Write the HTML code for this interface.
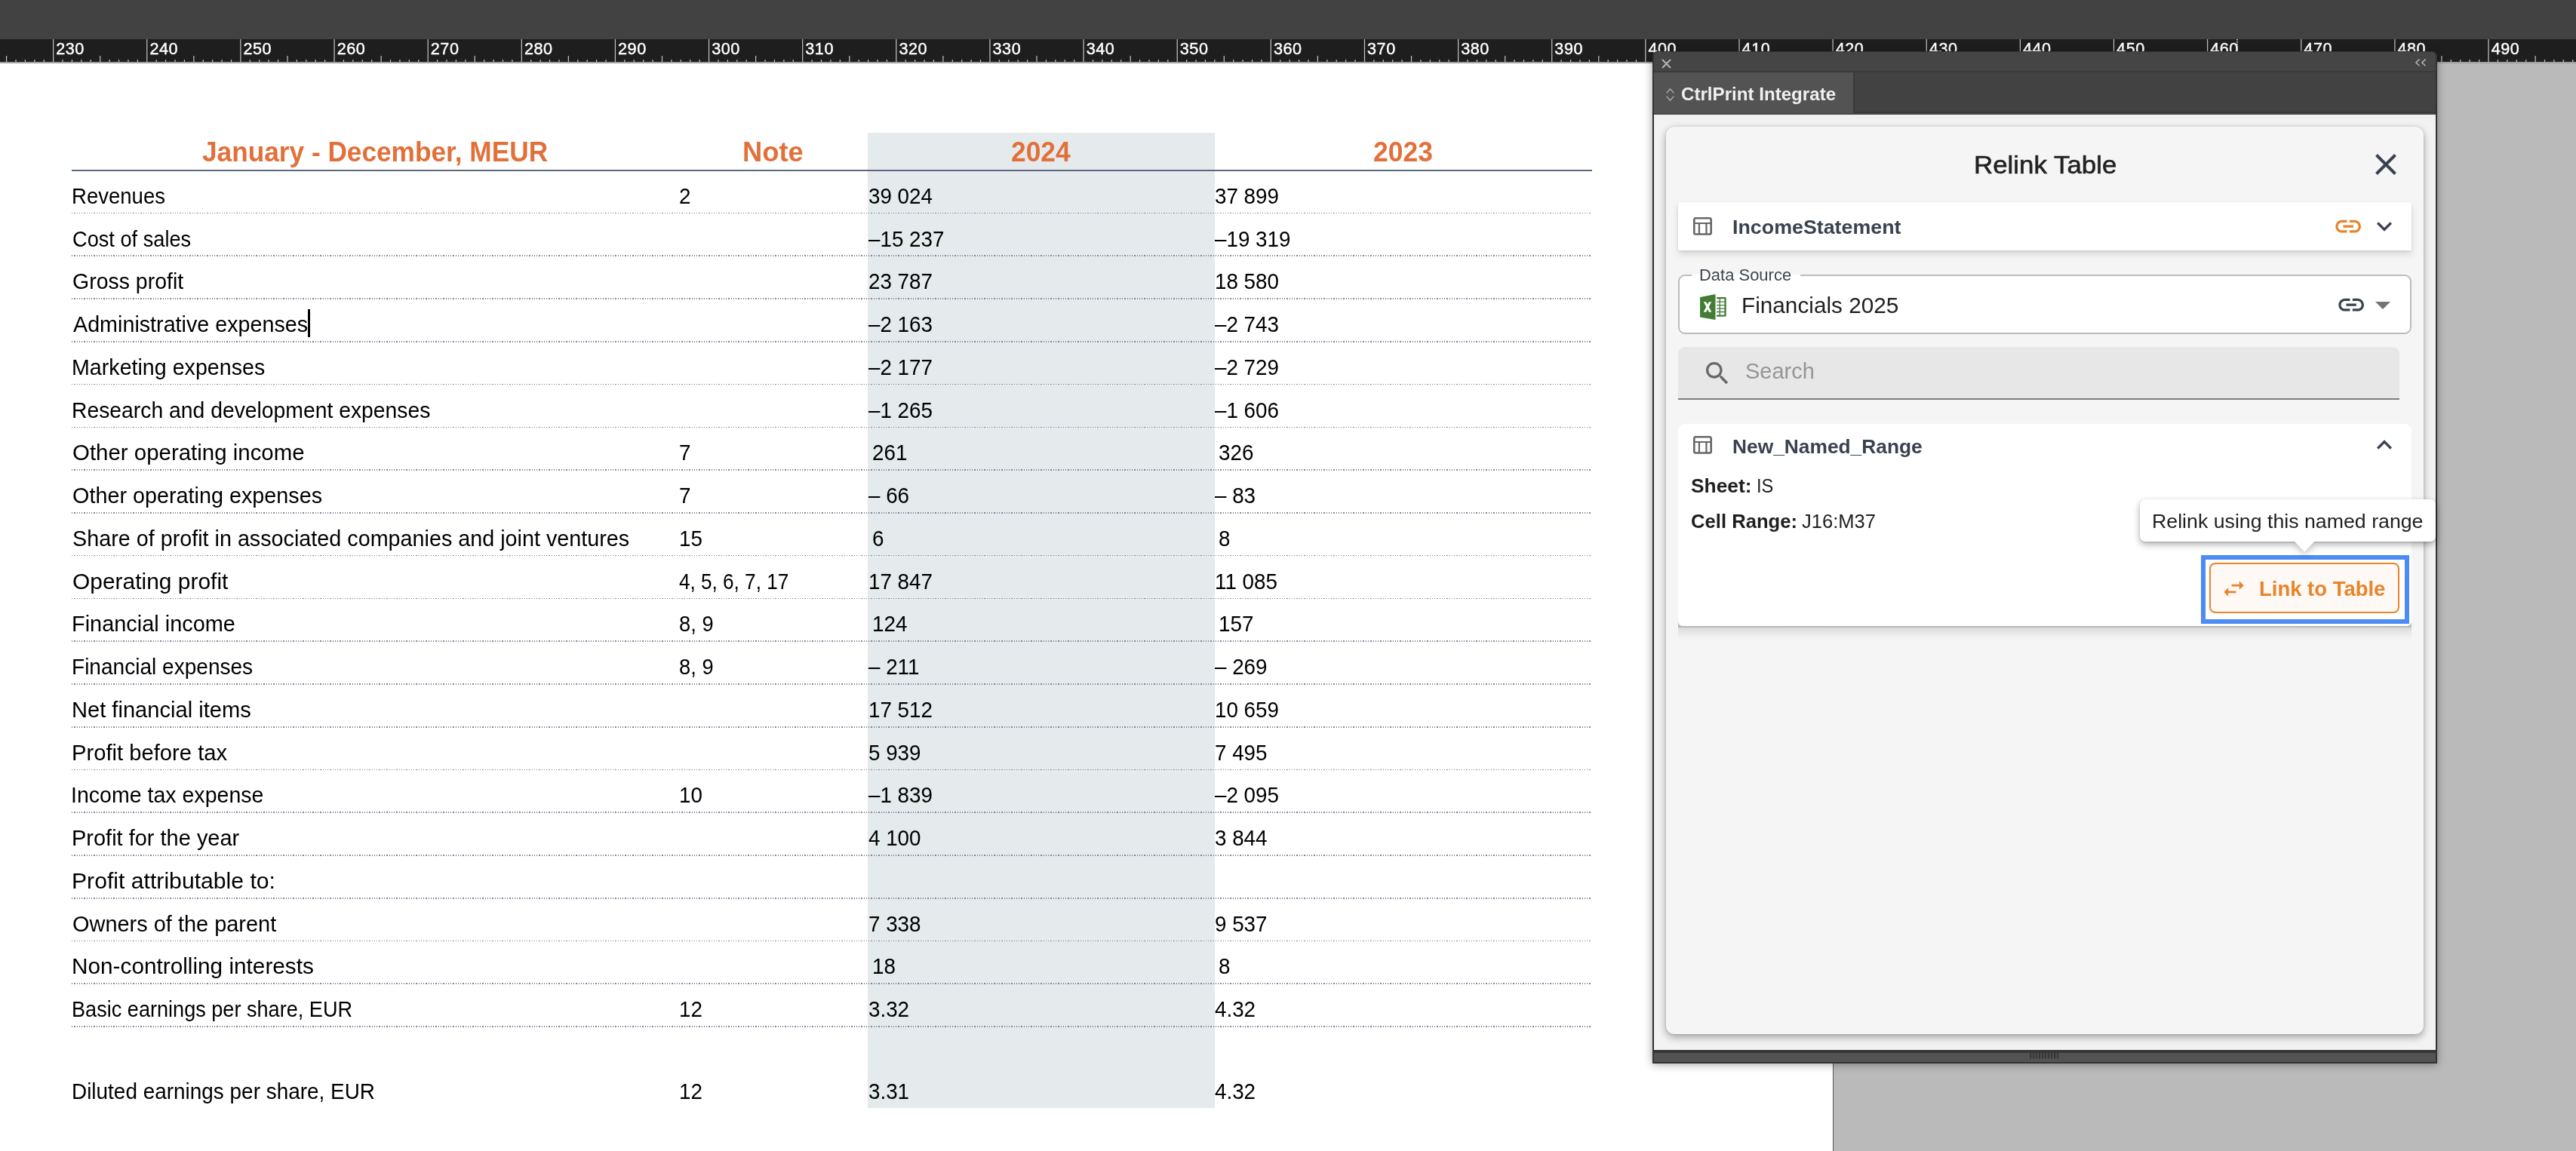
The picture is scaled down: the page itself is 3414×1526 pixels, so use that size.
<!DOCTYPE html>
<html><head><meta charset="utf-8"><title>Relink Table</title>
<style>
html,body{margin:0;padding:0}
#w{position:absolute;left:0;top:0;width:3414px;height:1526px;will-change:transform}
body{width:3414px;height:1526px;position:relative;overflow:hidden;background:#fff;font-family:"Liberation Sans",sans-serif}
.a{position:absolute}
.t{position:absolute;white-space:pre;line-height:0;transform-origin:0 0}
svg{position:absolute;overflow:visible}
.dot{position:absolute;height:1.7px;left:95px;width:2015px;background:repeating-linear-gradient(90deg,#7a8497 0 1.25px,rgba(122,132,151,0) 1.25px 3.26px)}
</style></head><body><div id="w">

<div class="a" style="left:2430px;top:84px;width:984px;height:1442px;background:#bababa;"></div>
<div class="a" style="left:2429px;top:84px;width:1px;height:1442px;background:#555;"></div>
<div class="a" style="left:1150px;top:176px;width:460px;height:1293.3px;background:#e5eaec;"></div>
<span class="t" style="left:268.17px;top:200.70px;font-size:37.2px;color:#e2703a;font-weight:bold;transform:scaleX(0.9472);">January - December, MEUR</span>
<span class="t" style="left:984.04px;top:200.70px;font-size:37.2px;color:#e2703a;font-weight:bold;transform:scaleX(0.9766);">Note</span>
<span class="t" style="left:1340.16px;top:200.70px;font-size:37.2px;color:#e2703a;font-weight:bold;transform:scaleX(0.9498);">2024</span>
<span class="t" style="left:1820.31px;top:200.70px;font-size:37.2px;color:#e2703a;font-weight:bold;transform:scaleX(0.9543);">2023</span>
<div class="a" style="left:95px;top:224.9px;width:2015px;height:2.1px;background:#5a697e;"></div>
<span class="t" style="left:94.80px;top:259.80px;font-size:30px;transform:scaleX(0.9180);">Revenues</span>
<span class="t" style="left:899.60px;top:259.80px;font-size:30px;transform:scaleX(0.9260);">2</span>
<span class="t" style="left:1150.60px;top:259.80px;font-size:30px;transform:scaleX(0.9260);">39 024</span>
<span class="t" style="left:1609.60px;top:259.80px;font-size:30px;transform:scaleX(0.9260);">37 899</span>
<div class="dot" style="top:281.70px"></div>
<span class="t" style="left:95.64px;top:316.56px;font-size:30px;transform:scaleX(0.9066);">Cost of sales</span>
<span class="t" style="left:1150.60px;top:316.56px;font-size:30px;transform:scaleX(0.9260);">–15 237</span>
<span class="t" style="left:1609.60px;top:316.56px;font-size:30px;transform:scaleX(0.9260);">–19 319</span>
<div class="dot" style="top:338.46px"></div>
<span class="t" style="left:95.58px;top:373.32px;font-size:30px;transform:scaleX(0.9491);">Gross profit</span>
<span class="t" style="left:1150.60px;top:373.32px;font-size:30px;transform:scaleX(0.9260);">23 787</span>
<span class="t" style="left:1609.60px;top:373.32px;font-size:30px;transform:scaleX(0.9260);">18 580</span>
<div class="dot" style="top:395.22px"></div>
<span class="t" style="left:97.00px;top:430.08px;font-size:30px;transform:scaleX(0.9570);">Administrative expenses</span>
<span class="t" style="left:1150.60px;top:430.08px;font-size:30px;transform:scaleX(0.9260);">–2 163</span>
<span class="t" style="left:1609.60px;top:430.08px;font-size:30px;transform:scaleX(0.9260);">–2 743</span>
<div class="dot" style="top:451.98px"></div>
<span class="t" style="left:94.71px;top:486.84px;font-size:30px;transform:scaleX(0.9545);">Marketing expenses</span>
<span class="t" style="left:1150.60px;top:486.84px;font-size:30px;transform:scaleX(0.9260);">–2 177</span>
<span class="t" style="left:1609.60px;top:486.84px;font-size:30px;transform:scaleX(0.9260);">–2 729</span>
<div class="dot" style="top:508.74px"></div>
<span class="t" style="left:94.73px;top:543.60px;font-size:30px;transform:scaleX(0.9439);">Research and development expenses</span>
<span class="t" style="left:1150.60px;top:543.60px;font-size:30px;transform:scaleX(0.9260);">–1 265</span>
<span class="t" style="left:1609.60px;top:543.60px;font-size:30px;transform:scaleX(0.9260);">–1 606</span>
<div class="dot" style="top:565.50px"></div>
<span class="t" style="left:95.68px;top:600.36px;font-size:30px;transform:scaleX(0.9812);">Other operating income</span>
<span class="t" style="left:899.60px;top:600.36px;font-size:30px;transform:scaleX(0.9260);">7</span>
<span class="t" style="left:1156.30px;top:600.36px;font-size:30px;transform:scaleX(0.9260);">261</span>
<span class="t" style="left:1615.30px;top:600.36px;font-size:30px;transform:scaleX(0.9260);">326</span>
<div class="dot" style="top:622.26px"></div>
<span class="t" style="left:95.71px;top:657.12px;font-size:30px;transform:scaleX(0.9592);">Other operating expenses</span>
<span class="t" style="left:899.60px;top:657.12px;font-size:30px;transform:scaleX(0.9260);">7</span>
<span class="t" style="left:1150.60px;top:657.12px;font-size:30px;transform:scaleX(0.9260);">– 66</span>
<span class="t" style="left:1609.60px;top:657.12px;font-size:30px;transform:scaleX(0.9260);">– 83</span>
<div class="dot" style="top:679.02px"></div>
<span class="t" style="left:95.71px;top:713.88px;font-size:30px;transform:scaleX(0.9581);">Share of profit in associated companies and joint ventures</span>
<span class="t" style="left:899.60px;top:713.88px;font-size:30px;transform:scaleX(0.9260);">15</span>
<span class="t" style="left:1156.30px;top:713.88px;font-size:30px;transform:scaleX(0.9260);">6</span>
<span class="t" style="left:1615.30px;top:713.88px;font-size:30px;transform:scaleX(0.9260);">8</span>
<div class="dot" style="top:735.78px"></div>
<span class="t" style="left:95.65px;top:770.64px;font-size:30px;transform:scaleX(0.9981);">Operating profit</span>
<span class="t" style="left:899.60px;top:770.64px;font-size:30px;transform:scaleX(0.8705);">4, 5, 6, 7, 17</span>
<span class="t" style="left:1150.60px;top:770.64px;font-size:30px;transform:scaleX(0.9260);">17 847</span>
<span class="t" style="left:1609.60px;top:770.64px;font-size:30px;transform:scaleX(0.9260);">11 085</span>
<div class="dot" style="top:792.54px"></div>
<span class="t" style="left:94.69px;top:827.40px;font-size:30px;transform:scaleX(0.9637);">Financial income</span>
<span class="t" style="left:899.60px;top:827.40px;font-size:30px;transform:scaleX(0.9115);">8, 9</span>
<span class="t" style="left:1156.30px;top:827.40px;font-size:30px;transform:scaleX(0.9260);">124</span>
<span class="t" style="left:1615.30px;top:827.40px;font-size:30px;transform:scaleX(0.9260);">157</span>
<div class="dot" style="top:849.30px"></div>
<span class="t" style="left:94.76px;top:884.16px;font-size:30px;transform:scaleX(0.9351);">Financial expenses</span>
<span class="t" style="left:899.60px;top:884.16px;font-size:30px;transform:scaleX(0.9115);">8, 9</span>
<span class="t" style="left:1150.60px;top:884.16px;font-size:30px;transform:scaleX(0.9260);">– 211</span>
<span class="t" style="left:1609.60px;top:884.16px;font-size:30px;transform:scaleX(0.9260);">– 269</span>
<div class="dot" style="top:906.06px"></div>
<span class="t" style="left:94.67px;top:940.92px;font-size:30px;transform:scaleX(0.9700);">Net financial items</span>
<span class="t" style="left:1150.60px;top:940.92px;font-size:30px;transform:scaleX(0.9260);">17 512</span>
<span class="t" style="left:1609.60px;top:940.92px;font-size:30px;transform:scaleX(0.9260);">10 659</span>
<div class="dot" style="top:962.82px"></div>
<span class="t" style="left:94.66px;top:997.68px;font-size:30px;transform:scaleX(0.9732);">Profit before tax</span>
<span class="t" style="left:1150.60px;top:997.68px;font-size:30px;transform:scaleX(0.9260);">5 939</span>
<span class="t" style="left:1609.60px;top:997.68px;font-size:30px;transform:scaleX(0.9260);">7 495</span>
<div class="dot" style="top:1019.58px"></div>
<span class="t" style="left:94.43px;top:1054.44px;font-size:30px;transform:scaleX(0.9512);">Income tax expense</span>
<span class="t" style="left:899.60px;top:1054.44px;font-size:30px;transform:scaleX(0.9260);">10</span>
<span class="t" style="left:1150.60px;top:1054.44px;font-size:30px;transform:scaleX(0.9260);">–1 839</span>
<span class="t" style="left:1609.60px;top:1054.44px;font-size:30px;transform:scaleX(0.9260);">–2 095</span>
<div class="dot" style="top:1076.34px"></div>
<span class="t" style="left:94.68px;top:1111.20px;font-size:30px;transform:scaleX(0.9659);">Profit for the year</span>
<span class="t" style="left:1150.60px;top:1111.20px;font-size:30px;transform:scaleX(0.9260);">4 100</span>
<span class="t" style="left:1609.60px;top:1111.20px;font-size:30px;transform:scaleX(0.9260);">3 844</span>
<div class="dot" style="top:1133.10px"></div>
<span class="t" style="left:94.59px;top:1167.96px;font-size:30px;transform:scaleX(1.0057);">Profit attributable to:</span>
<div class="dot" style="top:1189.86px"></div>
<span class="t" style="left:95.70px;top:1224.72px;font-size:30px;transform:scaleX(0.9646);">Owners of the parent</span>
<span class="t" style="left:1150.60px;top:1224.72px;font-size:30px;transform:scaleX(0.9260);">7 338</span>
<span class="t" style="left:1609.60px;top:1224.72px;font-size:30px;transform:scaleX(0.9260);">9 537</span>
<div class="dot" style="top:1246.62px"></div>
<span class="t" style="left:94.62px;top:1281.48px;font-size:30px;transform:scaleX(0.9919);">Non-controlling interests</span>
<span class="t" style="left:1156.30px;top:1281.48px;font-size:30px;transform:scaleX(0.9260);">18</span>
<span class="t" style="left:1615.30px;top:1281.48px;font-size:30px;transform:scaleX(0.9260);">8</span>
<div class="dot" style="top:1303.38px"></div>
<span class="t" style="left:94.83px;top:1338.24px;font-size:30px;transform:scaleX(0.9034);">Basic earnings per share, EUR</span>
<span class="t" style="left:899.60px;top:1338.24px;font-size:30px;transform:scaleX(0.9260);">12</span>
<span class="t" style="left:1150.60px;top:1338.24px;font-size:30px;transform:scaleX(0.9260);">3.32</span>
<span class="t" style="left:1609.60px;top:1338.24px;font-size:30px;transform:scaleX(0.9260);">4.32</span>
<div class="dot" style="top:1360.14px"></div>
<span class="t" style="left:94.77px;top:1446.80px;font-size:30px;transform:scaleX(0.9309);">Diluted earnings per share, EUR</span>
<span class="t" style="left:899.60px;top:1446.80px;font-size:30px;transform:scaleX(0.9260);">12</span>
<span class="t" style="left:1150.60px;top:1446.80px;font-size:30px;transform:scaleX(0.9260);">3.31</span>
<span class="t" style="left:1609.60px;top:1446.80px;font-size:30px;transform:scaleX(0.9260);">4.32</span>
<div class="a" style="left:408.3px;top:410px;width:2.6px;height:37.2px;background:#000;"></div>
<div class="a" style="left:0px;top:0px;width:3414px;height:52px;background:#424242;"></div>
<svg class="a" style="left:0;top:52px" width="3414" height="32" viewBox="0 0 3414 32"><rect x="0" y="0" width="3414" height="30.3" fill="#1e1e1e"/><rect x="0" y="30.3" width="3414" height="1.7" fill="#9a9a9a"/><path d="M8.59 22V30M21.00 27V30M33.41 27V30M45.82 27V30M58.24 27V30M70.65 0V30M83.06 27V30M95.48 27V30M107.89 27V30M120.30 27V30M132.72 22V30M145.13 27V30M157.54 27V30M169.95 27V30M182.37 27V30M194.78 0V30M207.19 27V30M219.61 27V30M232.02 27V30M244.43 27V30M256.85 22V30M269.26 27V30M281.67 27V30M294.08 27V30M306.50 27V30M318.91 0V30M331.32 27V30M343.74 27V30M356.15 27V30M368.56 27V30M380.98 22V30M393.39 27V30M405.80 27V30M418.21 27V30M430.63 27V30M443.04 0V30M455.45 27V30M467.87 27V30M480.28 27V30M492.69 27V30M505.11 22V30M517.52 27V30M529.93 27V30M542.34 27V30M554.76 27V30M567.17 0V30M579.58 27V30M592.00 27V30M604.41 27V30M616.82 27V30M629.24 22V30M641.65 27V30M654.06 27V30M666.47 27V30M678.89 27V30M691.30 0V30M703.71 27V30M716.13 27V30M728.54 27V30M740.95 27V30M753.37 22V30M765.78 27V30M778.19 27V30M790.60 27V30M803.02 27V30M815.43 0V30M827.84 27V30M840.26 27V30M852.67 27V30M865.08 27V30M877.50 22V30M889.91 27V30M902.32 27V30M914.73 27V30M927.15 27V30M939.56 0V30M951.97 27V30M964.39 27V30M976.80 27V30M989.21 27V30M1001.62 22V30M1014.04 27V30M1026.45 27V30M1038.86 27V30M1051.28 27V30M1063.69 0V30M1076.10 27V30M1088.52 27V30M1100.93 27V30M1113.34 27V30M1125.76 22V30M1138.17 27V30M1150.58 27V30M1162.99 27V30M1175.41 27V30M1187.82 0V30M1200.23 27V30M1212.65 27V30M1225.06 27V30M1237.47 27V30M1249.89 22V30M1262.30 27V30M1274.71 27V30M1287.12 27V30M1299.54 27V30M1311.95 0V30M1324.36 27V30M1336.78 27V30M1349.19 27V30M1361.60 27V30M1374.02 22V30M1386.43 27V30M1398.84 27V30M1411.25 27V30M1423.67 27V30M1436.08 0V30M1448.49 27V30M1460.91 27V30M1473.32 27V30M1485.73 27V30M1498.15 22V30M1510.56 27V30M1522.97 27V30M1535.38 27V30M1547.80 27V30M1560.21 0V30M1572.62 27V30M1585.04 27V30M1597.45 27V30M1609.86 27V30M1622.28 22V30M1634.69 27V30M1647.10 27V30M1659.51 27V30M1671.93 27V30M1684.34 0V30M1696.75 27V30M1709.17 27V30M1721.58 27V30M1733.99 27V30M1746.41 22V30M1758.82 27V30M1771.23 27V30M1783.64 27V30M1796.06 27V30M1808.47 0V30M1820.88 27V30M1833.30 27V30M1845.71 27V30M1858.12 27V30M1870.54 22V30M1882.95 27V30M1895.36 27V30M1907.77 27V30M1920.19 27V30M1932.60 0V30M1945.01 27V30M1957.43 27V30M1969.84 27V30M1982.25 27V30M1994.67 22V30M2007.08 27V30M2019.49 27V30M2031.90 27V30M2044.32 27V30M2056.73 0V30M2069.14 27V30M2081.56 27V30M2093.97 27V30M2106.38 27V30M2118.80 22V30M2131.21 27V30M2143.62 27V30M2156.03 27V30M2168.45 27V30M2180.86 0V30M2193.27 27V30M2205.69 27V30M2218.10 27V30M2230.51 27V30M2242.93 22V30M2255.34 27V30M2267.75 27V30M2280.16 27V30M2292.58 27V30M2304.99 0V30M2317.40 27V30M2329.82 27V30M2342.23 27V30M2354.64 27V30M2367.06 22V30M2379.47 27V30M2391.88 27V30M2404.29 27V30M2416.71 27V30M2429.12 0V30M2441.53 27V30M2453.95 27V30M2466.36 27V30M2478.77 27V30M2491.18 22V30M2503.60 27V30M2516.01 27V30M2528.42 27V30M2540.84 27V30M2553.25 0V30M2565.66 27V30M2578.08 27V30M2590.49 27V30M2602.90 27V30M2615.32 22V30M2627.73 27V30M2640.14 27V30M2652.55 27V30M2664.97 27V30M2677.38 0V30M2689.79 27V30M2702.21 27V30M2714.62 27V30M2727.03 27V30M2739.45 22V30M2751.86 27V30M2764.27 27V30M2776.68 27V30M2789.10 27V30M2801.51 0V30M2813.92 27V30M2826.34 27V30M2838.75 27V30M2851.16 27V30M2863.58 22V30M2875.99 27V30M2888.40 27V30M2900.81 27V30M2913.23 27V30M2925.64 0V30M2938.05 27V30M2950.47 27V30M2962.88 27V30M2975.29 27V30M2987.70 22V30M3000.12 27V30M3012.53 27V30M3024.94 27V30M3037.36 27V30M3049.77 0V30M3062.18 27V30M3074.60 27V30M3087.01 27V30M3099.42 27V30M3111.84 22V30M3124.25 27V30M3136.66 27V30M3149.07 27V30M3161.49 27V30M3173.90 0V30M3186.31 27V30M3198.73 27V30M3211.14 27V30M3223.55 27V30M3235.97 22V30M3248.38 27V30M3260.79 27V30M3273.20 27V30M3285.62 27V30M3298.03 0V30M3310.44 27V30M3322.86 27V30M3335.27 27V30M3347.68 27V30M3360.10 22V30M3372.51 27V30M3384.92 27V30M3397.33 27V30M3409.75 27V30" stroke="#c4c4c4" stroke-width="1.2" fill="none"/><text x="74.25" y="20" font-family="Liberation Sans, sans-serif" font-size="21.6" letter-spacing="0.55" fill="#fff" stroke="#fff" stroke-width="0.45">230</text><text x="198.38" y="20" font-family="Liberation Sans, sans-serif" font-size="21.6" letter-spacing="0.55" fill="#fff" stroke="#fff" stroke-width="0.45">240</text><text x="322.51" y="20" font-family="Liberation Sans, sans-serif" font-size="21.6" letter-spacing="0.55" fill="#fff" stroke="#fff" stroke-width="0.45">250</text><text x="446.64" y="20" font-family="Liberation Sans, sans-serif" font-size="21.6" letter-spacing="0.55" fill="#fff" stroke="#fff" stroke-width="0.45">260</text><text x="570.77" y="20" font-family="Liberation Sans, sans-serif" font-size="21.6" letter-spacing="0.55" fill="#fff" stroke="#fff" stroke-width="0.45">270</text><text x="694.90" y="20" font-family="Liberation Sans, sans-serif" font-size="21.6" letter-spacing="0.55" fill="#fff" stroke="#fff" stroke-width="0.45">280</text><text x="819.03" y="20" font-family="Liberation Sans, sans-serif" font-size="21.6" letter-spacing="0.55" fill="#fff" stroke="#fff" stroke-width="0.45">290</text><text x="943.16" y="20" font-family="Liberation Sans, sans-serif" font-size="21.6" letter-spacing="0.55" fill="#fff" stroke="#fff" stroke-width="0.45">300</text><text x="1067.29" y="20" font-family="Liberation Sans, sans-serif" font-size="21.6" letter-spacing="0.55" fill="#fff" stroke="#fff" stroke-width="0.45">310</text><text x="1191.42" y="20" font-family="Liberation Sans, sans-serif" font-size="21.6" letter-spacing="0.55" fill="#fff" stroke="#fff" stroke-width="0.45">320</text><text x="1315.55" y="20" font-family="Liberation Sans, sans-serif" font-size="21.6" letter-spacing="0.55" fill="#fff" stroke="#fff" stroke-width="0.45">330</text><text x="1439.68" y="20" font-family="Liberation Sans, sans-serif" font-size="21.6" letter-spacing="0.55" fill="#fff" stroke="#fff" stroke-width="0.45">340</text><text x="1563.81" y="20" font-family="Liberation Sans, sans-serif" font-size="21.6" letter-spacing="0.55" fill="#fff" stroke="#fff" stroke-width="0.45">350</text><text x="1687.94" y="20" font-family="Liberation Sans, sans-serif" font-size="21.6" letter-spacing="0.55" fill="#fff" stroke="#fff" stroke-width="0.45">360</text><text x="1812.07" y="20" font-family="Liberation Sans, sans-serif" font-size="21.6" letter-spacing="0.55" fill="#fff" stroke="#fff" stroke-width="0.45">370</text><text x="1936.20" y="20" font-family="Liberation Sans, sans-serif" font-size="21.6" letter-spacing="0.55" fill="#fff" stroke="#fff" stroke-width="0.45">380</text><text x="2060.33" y="20" font-family="Liberation Sans, sans-serif" font-size="21.6" letter-spacing="0.55" fill="#fff" stroke="#fff" stroke-width="0.45">390</text><text x="2184.46" y="20" font-family="Liberation Sans, sans-serif" font-size="21.6" letter-spacing="0.55" fill="#fff" stroke="#fff" stroke-width="0.45">400</text><text x="2308.59" y="20" font-family="Liberation Sans, sans-serif" font-size="21.6" letter-spacing="0.55" fill="#fff" stroke="#fff" stroke-width="0.45">410</text><text x="2432.72" y="20" font-family="Liberation Sans, sans-serif" font-size="21.6" letter-spacing="0.55" fill="#fff" stroke="#fff" stroke-width="0.45">420</text><text x="2556.85" y="20" font-family="Liberation Sans, sans-serif" font-size="21.6" letter-spacing="0.55" fill="#fff" stroke="#fff" stroke-width="0.45">430</text><text x="2680.98" y="20" font-family="Liberation Sans, sans-serif" font-size="21.6" letter-spacing="0.55" fill="#fff" stroke="#fff" stroke-width="0.45">440</text><text x="2805.11" y="20" font-family="Liberation Sans, sans-serif" font-size="21.6" letter-spacing="0.55" fill="#fff" stroke="#fff" stroke-width="0.45">450</text><text x="2929.24" y="20" font-family="Liberation Sans, sans-serif" font-size="21.6" letter-spacing="0.55" fill="#fff" stroke="#fff" stroke-width="0.45">460</text><text x="3053.37" y="20" font-family="Liberation Sans, sans-serif" font-size="21.6" letter-spacing="0.55" fill="#fff" stroke="#fff" stroke-width="0.45">470</text><text x="3177.50" y="20" font-family="Liberation Sans, sans-serif" font-size="21.6" letter-spacing="0.55" fill="#fff" stroke="#fff" stroke-width="0.45">480</text><text x="3301.63" y="20" font-family="Liberation Sans, sans-serif" font-size="21.6" letter-spacing="0.55" fill="#fff" stroke="#fff" stroke-width="0.45">490</text><path d="M2965 0V16" stroke="#fff" stroke-width="1.5" stroke-dasharray="1.5 1.5"/></svg>
<div class="a" style="left:2190px;top:68px;width:1040px;height:1340px;background:#484848;border-radius:7px 7px 0 0;box-shadow:0 3px 12px rgba(0,0,0,.38);"></div>
<div class="a" style="left:2190px;top:68px;width:1036px;height:1338px;border:2px solid #333;border-bottom-width:2px;border-radius:7px 7px 0 0;"></div>
<div class="a" style="left:2192px;top:69px;width:1036px;height:25.5px;background:#454545;border-radius:6px 6px 0 0;"></div>
<div class="a" style="left:2192px;top:94.3px;width:1036px;height:1.9px;background:#3b3b3b;"></div>
<div class="a" style="left:2192px;top:96px;width:1036px;height:54px;background:#424242;"></div>
<div class="a" style="left:2192px;top:96px;width:264px;height:53.8px;background:#535353;"></div>
<div class="a" style="left:2456px;top:96px;width:2px;height:53.8px;background:#3a3a3a;"></div>
<div class="a" style="left:2458px;top:148px;width:770px;height:1.8px;background:#3a3a3a;"></div>
<div class="a" style="left:2192px;top:149.8px;width:1036px;height:2.1px;background:#474747;"></div>
<svg style="left:2201.5px;top:77.5px" width="13" height="13" viewBox="0 0 13 13"><path d="M1 1L12 12M12 1L1 12" stroke="#b4b4b4" stroke-width="2" fill="none"/></svg>
<svg style="left:3200.5px;top:78px" width="15" height="10" viewBox="0 0 15 10"><path d="M5.6 .6L.9 4.9 5.6 9.4M13.6 .6L8.9 4.9 13.6 9.4" stroke="#c8c8c8" stroke-width="1.3" fill="none"/></svg>
<svg style="left:2207.5px;top:116.5px" width="11" height="17" viewBox="0 0 11 17"><path d="M.7 6.3L5.5 .9 10.3 6.3M.7 10.7L5.5 16.1 10.3 10.7" stroke="#bdbdbd" stroke-width="1.1" fill="none"/></svg>
<span class="t" style="left:2228.23px;top:124.83px;font-size:23.0px;color:#f0f0f0;font-weight:bold;transform:scaleX(1.0490);">CtrlPrint Integrate</span>
<div class="a" style="left:2192px;top:151.9px;width:1036px;height:1240px;background:#f3f3f3;background:linear-gradient(180deg,#f0f0f0 0,#f3f3f3 14px);"></div>
<div class="a" style="left:2192px;top:1391.8px;width:1036px;height:4.1px;background:#363636;"></div>
<div class="a" style="left:2192px;top:1395.8px;width:1036px;height:12.3px;background:#535353;"></div>
<svg style="left:0;top:1395.4px" width="3414" height="9" viewBox="0 0 3414 9"><path d="M2691.05 0V8.6M2695.07 0V8.6M2699.09 0V8.6M2703.11 0V8.6M2707.13 0V8.6M2711.15 0V8.6M2715.17 0V8.6M2719.19 0V8.6M2723.21 0V8.6M2727.23 0V8.6" stroke="#363636" stroke-width="2.1" fill="none"/></svg>
<div class="a" style="left:2208px;top:168px;width:1004px;height:1203px;background:#f5f5f5;border-radius:11px;box-shadow:0 4px 11px rgba(0,0,0,.34),0 0 3px rgba(0,0,0,.12);"></div>
<span class="t" style="left:2615.51px;top:218.02px;font-size:33.7px;color:#222;transform:scaleX(1.0355);-webkit-text-stroke:.6px #222;">Relink Table</span>
<svg style="left:3148px;top:204px" width="28" height="28" viewBox="0 0 28 28"><path d="M1.5 1.5L26.5 26.5M26.5 1.5L1.5 26.5" stroke="#3a424f" stroke-width="4" fill="none"/></svg>
<div class="a" style="left:2224px;top:268px;width:972px;height:63.7px;background:#fff;border-radius:4px 4px 0 0;box-shadow:0 5px 10px rgba(0,0,0,.13),0 1px 3px rgba(0,0,0,.08);"></div>
<svg style="left:2244.05px;top:288.05px" width="25" height="24" viewBox="0 0 25 24"><path d="M3 1.3H22a1.7 1.7 0 0 1 1.7 1.7V20.8a1.7 1.7 0 0 1 -1.7 1.7H3a1.7 1.7 0 0 1 -1.7 -1.7V3A1.7 1.7 0 0 1 3 1.3z" fill="none" stroke="#676767" stroke-width="2.6"/><path d="M1.3 8H23.7" stroke="#676767" stroke-width="2" fill="none"/><path d="M7.95 8V22.5M17.45 8V22.5" stroke="#676767" stroke-width="2.25" fill="none"/></svg>
<span class="t" style="left:2296.16px;top:300.62px;font-size:25.9px;color:#3a424f;font-weight:bold;transform:scaleX(1.0358);">IncomeStatement</span>
<svg style="left:3091.85px;top:279.85px" width="40.3" height="40.3" viewBox="0 0 24 24"><path fill="#e8842a" d="M3.9 12c0-1.71 1.39-3.1 3.1-3.1h4V7H7c-2.76 0-5 2.24-5 5s2.24 5 5 5h4v-1.9H7c-1.71 0-3.1-1.39-3.1-3.1zM8 13h8v-2H8v2zm9-6h-4v1.9h4c1.71 0 3.1 1.39 3.1 3.1s-1.39 3.1-3.1 3.1h-4V17h4c2.76 0 5-2.24 5-5s-2.24-5-5-5z"/></svg>
<svg style="left:3139.90px;top:279.88px" width="40" height="40" viewBox="0 0 24 24"><path d="M16.59 8.59L12 13.17 7.41 8.59 6 10l6 6 6-6z" fill="#3a424f"/></svg>
<div class="a" style="left:2224.3px;top:364.3px;width:967.3px;height:74.8px;background:#fff;border:2px solid #bcbcbc;border-radius:9px;"></div>
<div class="a" style="left:2241.8px;top:363.8px;width:144.2px;height:2.7px;background:#fff;"></div>
<span class="t" style="left:2252.34px;top:364.00px;font-size:22.8px;color:#3d4552;transform:scaleX(0.9635);">Data Source</span>
<svg style="left:2253px;top:389.60px" width="36" height="35" viewBox="0 0 36 35"><defs><clipPath id="xc"><rect x="4.66" y="10.25" width="10.74" height="13.5"/></clipPath></defs><path d="M22.05 3.9H33.4a1.3 1.3 0 0 1 1.3 1.3V28.4a1.3 1.3 0 0 1 -1.3 1.3H22.05V27.6H32.4V6.2H22.05z" fill="#437c37"/><path d="M22.05 10.1H33M22.05 14.6H33M22.05 19.05H33M22.05 23.45H33M26.26 5V28.5" stroke="#437c37" stroke-width="1.35" fill="none"/><path d="M0.07 3.9L20.5 .05V34.1L.07 30.4z" fill="#437c37"/><g clip-path="url(#xc)"><path d="M5.3 8L14.76 25.75M14.76 8L5.3 25.75" stroke="#fff" stroke-width="3" fill="none"/></g></svg>
<span class="t" style="left:2308.42px;top:404.73px;font-size:29.9px;color:#1f1f1f;transform:scaleX(0.9953);">Financials 2025</span>
<svg style="left:3095.85px;top:383.85px" width="40.3" height="40.3" viewBox="0 0 24 24"><path fill="#3a424f" d="M3.9 12c0-1.71 1.39-3.1 3.1-3.1h4V7H7c-2.76 0-5 2.24-5 5s2.24 5 5 5h4v-1.9H7c-1.71 0-3.1-1.39-3.1-3.1zM8 13h8v-2H8v2zm9-6h-4v1.9h4c1.71 0 3.1 1.39 3.1 3.1s-1.39 3.1-3.1 3.1h-4V17h4c2.76 0 5-2.24 5-5s-2.24-5-5-5z"/></svg>
<svg style="left:3148px;top:400px" width="20" height="10" viewBox="0 0 20 10"><path d="M0 0H20L10 10z" fill="#747474"/></svg>
<div class="a" style="left:2224px;top:460px;width:956px;height:68.3px;background:#e7e7e7;border-bottom:2px solid #7e7e7e;border-radius:9px 9px 0 0;"></div>
<svg style="left:2256px;top:475px" width="40" height="40" viewBox="0 0 24 24"><path fill="#686868" d="M15.5 14h-.79l-.28-.27C15.41 12.59 16 11.11 16 9.5 16 5.91 13.09 3 9.5 3S3 5.91 3 9.5 5.91 16 9.5 16c1.61 0 3.09-.59 4.23-1.57l.27.28v.79l5 4.99L20.49 19l-4.99-5zm-6 0C7.01 14 5 11.99 5 9.5S7.01 5 9.5 5 14 7.01 14 9.5 11.99 14 9.5 14z"/></svg>
<span class="t" style="left:2312.79px;top:491.54px;font-size:29.6px;color:#969696;transform:scaleX(0.9798);">Search</span>
<div class="a" style="left:2224px;top:824px;width:972px;height:26px;background:linear-gradient(180deg,#b9b9b9 0,#b9b9b9 8.1px,rgba(0,0,0,.115) 8.1px,rgba(0,0,0,.06) 14px,rgba(0,0,0,.02) 20px,rgba(0,0,0,0) 25px);"></div>
<div class="a" style="left:2224px;top:562px;width:972px;height:267.8px;background:#fff;border-radius:9px 9px 6px 6px;"></div>
<svg style="left:2244.05px;top:578.05px" width="25" height="24" viewBox="0 0 25 24"><path d="M3 1.3H22a1.7 1.7 0 0 1 1.7 1.7V20.8a1.7 1.7 0 0 1 -1.7 1.7H3a1.7 1.7 0 0 1 -1.7 -1.7V3A1.7 1.7 0 0 1 3 1.3z" fill="none" stroke="#676767" stroke-width="2.6"/><path d="M1.3 8H23.7" stroke="#676767" stroke-width="2" fill="none"/><path d="M7.95 8V22.5M17.45 8V22.5" stroke="#676767" stroke-width="2.25" fill="none"/></svg>
<span class="t" style="left:2296.19px;top:591.52px;font-size:26.2px;color:#3a424f;font-weight:bold;transform:scaleX(1.0057);">New_Named_Range</span>
<svg style="left:3139.90px;top:570.27px" width="40" height="40" viewBox="0 0 24 24"><path d="M12 8l-6 6 1.41 1.41L12 10.83l4.59 4.58L18 14z" fill="#3a424f"/></svg>
<span class="t" style="left:2241.01px;top:643.62px;font-size:25.9px;color:#1f1f1f;font-weight:bold;transform:scaleX(1.0182);">Sheet:</span>
<span class="t" style="left:2327.77px;top:643.62px;font-size:25.9px;color:#1f1f1f;transform:scaleX(0.9152);">IS</span>
<span class="t" style="left:2240.77px;top:691.12px;font-size:25.9px;color:#1f1f1f;font-weight:bold;transform:scaleX(0.9901);">Cell Range:</span>
<span class="t" style="left:2387.92px;top:691.12px;font-size:25.9px;color:#1f1f1f;transform:scaleX(0.9873);">J16:M37</span>
<div class="a" style="left:2917px;top:736.2px;width:264px;height:78.5px;border:6px solid #4d8bf5;background:#fff;"></div>
<div class="a" style="left:2928px;top:745.8px;width:247.8px;height:63.5px;border:2px solid #e8842a;border-radius:8px;background:#fef9f4;"></div>
<svg style="left:2942.5px;top:762.5px" width="35" height="35" viewBox="0 0 24 24"><path fill="#e8842a" d="M6.99 11L3 15l3.99 4v-3H14v-2H6.99v-3zM21 9l-3.99-4v3H10v2h7.01v3L21 9z"/></svg>
<span class="t" style="left:2994.11px;top:780.84px;font-size:27px;color:#e8842a;font-weight:bold;transform:scaleX(1.0175);">Link to Table</span>
<svg style="left:3039.8px;top:717.5px;filter:drop-shadow(0 4px 4px rgba(0,0,0,.22))" width="28.4" height="14" viewBox="0 0 28.4 14"><path d="M0 0H28.4L14.2 13.7z" fill="#fff"/></svg>
<div class="a" style="left:2836px;top:662px;width:391.8px;height:56px;background:#fff;border-radius:7px;box-shadow:0 4px 10px rgba(0,0,0,.30),0 1px 3px rgba(0,0,0,.14);"></div>
<svg style="left:3039.8px;top:716.5px" width="28.4" height="14" viewBox="0 0 28.4 14"><path d="M0 0H28.4L14.2 13.7z" fill="#fff"/></svg>
<span class="t" style="left:2851.86px;top:690.89px;font-size:26px;color:#1f1f1f;transform:scaleX(1.0278);">Relink using this named range</span>
</div></body></html>
